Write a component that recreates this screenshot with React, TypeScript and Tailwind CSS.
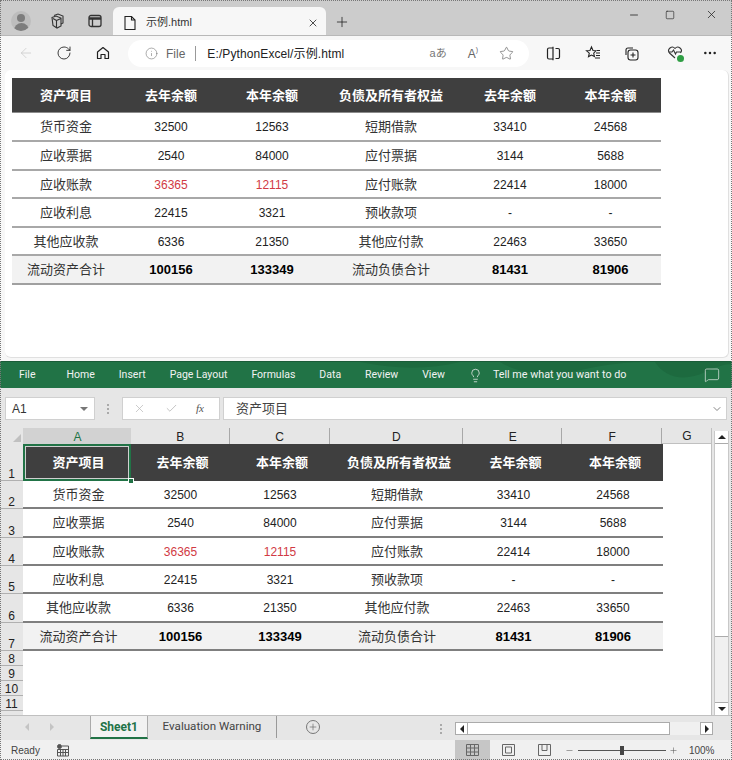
import React from 'react';
import { Plus, X, ArrowLeft, RotateCw, Star, MoreHorizontal, Check, ChevronDown, Lightbulb, MessageSquare, Info, Minus, Square } from 'lucide-react';

const FONT = "font-['Liberation_Sans','Noto_Sans_CJK_SC',sans-serif]";
const UI_FONT = "font-['Roboto','Noto_Sans_CJK_SC',sans-serif]";

const HEAD = ['资产项目', '去年余额', '本年余额', '负债及所有者权益', '去年余额', '本年余额'];
const ROWS = [
    ['货币资金', '32500', '12563', '短期借款', '33410', '24568'],
    ['应收票据', '2540', '84000', '应付票据', '3144', '5688'],
    ['应收账款', '36365', '12115', '应付账款', '22414', '18000'],
    ['应收利息', '22415', '3321', '预收款项', '-', '-'],
    ['其他应收款', '6336', '21350', '其他应付款', '22463', '33650'],
];
const TOTAL = ['流动资产合计', '100156', '133349', '流动负债合计', '81431', '81906'];

const cellStyle = (row: number, col: number, total?: boolean) => {
    if (col % 3 === 0) return 'text-[13px] text-[#333]';
    if (total) return 'text-[13px] font-bold text-black';
    if (row === 2 && col < 3) return 'text-[12px] text-[#d13a44]';
    return 'text-[12px] text-[#222]';
};

const Cell = ({ text, row, col, total }: { text: string; row: number; col: number; total?: boolean }) => (
    <div className={`flex items-center justify-center ${cellStyle(row, col, total)}`}>{text}</div>
);

const BrowserTable = () => {
    const heights = ['h-[29px]', 'h-[29px]', 'h-[28px]', 'h-[29px]', 'h-[28px]'];
    const cols = 'grid grid-cols-[108px_102px_100px_138px_100px_101px]';
    return (
        <div className="w-[649px]">
            <div className={`${cols} h-[35px] bg-[#3f3f3f] border-b border-[#8c8c8c]`}>
                {HEAD.map((h, i) => (
                    <div key={i} className="flex items-center justify-center pt-[1px] text-[13px] font-bold text-white">{h}</div>
                ))}
            </div>
            {ROWS.map((r, ri) => (
                <div key={ri} className={`${cols} ${heights[ri]} pt-[1px] border-b-2 border-[#a8a8a8]`}>
                    {r.map((t, ci) => <Cell key={ci} text={t} row={ri} col={ci} />)}
                </div>
            ))}
            <div className={`${cols} h-[29px] pt-[1px] bg-[#f2f2f2] border-b-2 border-[#a0a0a0]`}>
                {TOTAL.map((t, ci) => <Cell key={ci} text={t} row={9} col={ci} total />)}
            </div>
        </div>
    );
};

const SheetTable = () => {
    const heights = ['h-[28px]', 'h-[29px]', 'h-[28px]', 'h-[28px]', 'h-[29px]'];
    const cols = 'grid grid-cols-[108px_99px_100px_134px_99px_100px] [&>div:first-child]:pl-[3px]';
    return (
        <div className="w-[640px]">
            <div className={`${cols} h-[37px] bg-[#3f3f3f] relative`}>
                {HEAD.map((h, i) => (
                    <div key={i} className="flex items-center justify-center pl-[4px] text-[13px] font-bold text-white">{h}</div>
                ))}
                <div className="absolute left-0 top-0 w-[108px] h-[37px] border-2 border-[#217346] outline outline-1 -outline-offset-3 outline-[#d0d0d0]" />
                <div className="absolute left-[105px] top-[34px] w-[6px] h-[6px] bg-[#217346] border border-white" />
            </div>
            {ROWS.map((r, ri) => (
                <div key={ri} className={`${cols} ${heights[ri]} pt-[1px] border-b-2 border-[#7f7f7f]`}>
                    {r.map((t, ci) => <Cell key={ci} text={t} row={ri} col={ci} />)}
                </div>
            ))}
            <div className={`${cols} h-[28px] pt-[1px] bg-[#f2f2f2] border-b-2 border-[#7f7f7f]`}>
                {TOTAL.map((t, ci) => <Cell key={ci} text={t} row={9} col={ci} total />)}
            </div>
        </div>
    );
};

const TabStrip = () => (
    <div className="h-[36px] bg-[#cccccc] flex items-end border-b border-[#b8b8b8]">
        <div className="w-[20px] h-[20px] ml-[11px] mb-[4px] rounded-full bg-[#bdbdbd] overflow-hidden flex flex-col items-center shrink-0">
            <div className="w-[8px] h-[8px] rounded-full bg-[#7d7d7d] mt-[3px]" />
            <div className="w-[15px] h-[8px] rounded-t-full bg-[#7d7d7d] mt-[1px]" />
        </div>
        <svg width="18" height="18" viewBox="0 0 18 18" fill="none" stroke="#333" strokeWidth="1.1" className="ml-[17px] mb-[5px] shrink-0">
            <path d="M6 3.500 10 2l5 2v7l-2 1" />
            <path d="M4 5.500 8 4l5 2v8l-4 2-4-2.500z" />
            <path d="M8.500 8.500V16M8.500 8.500 5 6.500M8.500 8.500 13 6.500" />
        </svg>
        <svg width="16" height="16" viewBox="0 0 16 16" fill="none" stroke="#333" strokeWidth="1.3" className="ml-[21px] mb-[6px] shrink-0">
            <rect x="2" y="2.500" width="12" height="11" rx="2" />
            <path d="M2 5.500h12" strokeWidth="2.500" />
            <path d="M5.500 5.500v8" />
        </svg>
        <div className="ml-[10px] w-[213px] h-[28px] pt-[3px] bg-[#f7f7f7] rounded-t-[6px] flex items-center shrink-0">
            <svg width="14" height="16" viewBox="0 0 14 16" fill="none" stroke="#222" strokeWidth="1.1" className="ml-[10px]">
                <path d="M2 1.500h6.500l3.500 3.500v9.500H2z" />
                <path d="M8.500 1.500V5H12" />
            </svg>
            <span className="ml-[9px] text-[11px] text-[#333]">示例.html</span>
            <X size={12} strokeWidth={1.6} className="ml-auto mr-[7px] text-[#222]" />
        </div>
        <Plus size={16} strokeWidth={1.2} className="ml-[8px] mb-[5px] text-[#222]" />
        <div className="ml-auto flex items-center mb-[14px] mr-[6px] text-[#222]">
            <Minus size={12} strokeWidth={1.6} />
            <Square size={10} strokeWidth={1.5} className="ml-[25px]" />
            <X size={13} strokeWidth={1.4} className="ml-[30px] mr-[8px]" />
        </div>
    </div>
);

const AddressBar = () => (
    <div className="h-[34px] bg-[#f7f7f7] flex items-center text-[#333]">
        <ArrowLeft size={16} strokeWidth={1} className="ml-[18px] text-[#c4c4c4] shrink-0" />
        <RotateCw size={16} strokeWidth={1.3} className="ml-[22px] text-[#222] shrink-0" />
        <svg width="16" height="16" viewBox="0 0 16 16" fill="none" stroke="#222" strokeWidth="1.2" className="ml-[23px] shrink-0">
            <path d="M2.500 7 8 2.500 13.500 7v6.500h-3.500V9.500H6v4H2.500z" strokeLinejoin="round" />
        </svg>
        <div className="ml-[17px] w-[401px] h-[27px] mt-[1px] bg-white rounded-full flex items-center shrink-0">
            <Info size={13} strokeWidth={1} className="ml-[17px] text-[#666]" />
            <span className="ml-[8px] text-[12px] text-[#666]">File</span>
            <div className="ml-[10px] w-px h-[15px] bg-[#999]" />
            <span className="ml-[11px] text-[12px] tracking-[0.1px] text-[#222] whitespace-nowrap">E:/PythonExcel/示例.html</span>
            <span className="ml-auto text-[11px] text-[#777] whitespace-nowrap">aあ</span>
            <span className="ml-[21px] text-[12px] text-[#666]">A<span className="text-[7px] align-top">)</span></span>
            <Star size={15} strokeWidth={1} className="ml-[21px] mr-[15px] text-[#555]" />
        </div>
        <svg width="15" height="15" viewBox="0 0 15 15" fill="none" stroke="#222" strokeWidth="1.2" className="ml-[17px] shrink-0">
            <path d="M7 2H3a1.500 1.500 0 0 0-1.500 1.500v8A1.500 1.500 0 0 0 3 13h4zM7 .8v13.400M9.500 2.500H12A1.500 1.500 0 0 1 13.500 4v7a1.500 1.500 0 0 1-1.500 1.500H9.500" />
        </svg>
        <svg width="17" height="16" viewBox="0 0 17 16" fill="none" stroke="#222" strokeWidth="1.1" className="ml-[24px] shrink-0">
            <path d="m6.500 2 1.500 3.500 3 .3-2.300 2.400.7 3.300L6.500 10l-3 1.600.8-3.400L1.500 5.800l3.500-.3z" />
            <path d="M11 8h4M11 10.500h4M10 13h5M12 5.500h3" />
        </svg>
        <svg width="17" height="17" viewBox="0 0 17 17" fill="none" stroke="#222" strokeWidth="1.1" className="ml-[21px] shrink-0">
            <path d="M3 10V5a2 2 0 0 1 2-2h5" />
            <rect x="5" y="5" width="10" height="10" rx="2.500" />
            <path d="M10 7.500v5M7.500 10h5" />
        </svg>
        <div className="relative ml-[27px] w-[16px] h-[16px] shrink-0">
            <svg width="16" height="15" viewBox="0 0 16 15" fill="none" stroke="#333" strokeWidth="1.1">
                <path d="M8 13 2.500 8A3.300 3.300 0 0 1 8 3.500 3.300 3.300 0 0 1 13.500 8" />
                <path d="M1.500 7H5l1.500-2 2 4 1-2h4.500" />
            </svg>
            <div className="absolute right-[-1px] bottom-[-1px] w-[7px] h-[7px] rounded-full bg-[#2f9e44]" />
        </div>
        <MoreHorizontal size={16} strokeWidth={1.8} className="ml-[19px] text-[#222] shrink-0" />
    </div>
);

const RIBBON = [
    ['File', 'ml-[19px]'], ['Home', 'ml-[31px]'], ['Insert', 'ml-[24px]'], ['Page Layout', 'ml-[24px]'],
    ['Formulas', 'ml-[24px]'], ['Data', 'ml-[24px]'], ['Review', 'ml-[24px]'], ['View', 'ml-[24px]'],
];

const Ribbon = () => (
    <div className={`h-[27px] bg-[#217346] flex items-center text-[10.5px] text-[#f2f2f2] relative border-t border-[#1a5c38] ${UI_FONT}`}>
        <svg width="732" height="27" viewBox="0 0 732 27" className="absolute left-0 top-0">
            <path d="M360 0c40 8 70 7 100 0zM500 0c20 12 50 16 90 6 30-6 50-6 60-6zM655 0c10 16 30 20 50 10 10-5 20-8 27-8V0z" fill="#1d6a3f" />
        </svg>
        {RIBBON.map(([t, m]) => <span key={t} className={`relative ${m}`}>{t}</span>)}
        <Lightbulb size={15} strokeWidth={1.2} className="relative ml-[23px]" />
        <span className="relative ml-[10px] text-[10.75px]">Tell me what you want to do</span>
        <MessageSquare size={16} strokeWidth={1} className="relative ml-auto mr-[12px]" />
    </div>
);

const FormulaBar = () => (
    <div className="h-[40px] pt-[1px] bg-[#e6e6e6] flex items-center">
        <div className="ml-[5px] w-[90px] h-[23px] bg-white border border-[#d0d0d0] flex items-center text-[12px] text-[#333]">
            <span className="ml-[6px]">A1</span>
            <div className="ml-auto mr-[6px] w-0 h-0 border-x-[4px] border-x-transparent border-t-[4px] border-t-[#777]" />
        </div>
        <div className="ml-[12px] w-[2px] h-[10px] border-l-2 border-dotted border-[#aaa]" />
        <div className="ml-[13px] w-[98px] h-[23px] bg-white border border-[#d0d0d0] flex items-center text-[#bbb]">
            <X size={13} strokeWidth={1.4} className="ml-[10px]" />
            <Check size={13} strokeWidth={1.6} className="ml-[19px]" />
            <span className="ml-[18px] text-[11px] italic text-[#555] font-['Liberation_Serif',serif]">fx</span>
        </div>
        <div className="ml-[3px] w-[504px] h-[23px] bg-white border border-[#d0d0d0] flex items-center text-[13px] text-[#444]">
            <span className="ml-[12px]">资产项目</span>
            <ChevronDown size={12} strokeWidth={1.6} className="ml-auto mr-[3px] text-[#666]" />
        </div>
    </div>
);

const COLS = [
    ['A', 'w-[108px]'], ['B', 'w-[99px]'], ['C', 'w-[100px]'], ['D', 'w-[134px]'], ['E', 'w-[99px]'], ['F', 'w-[100px]'], ['G', 'w-[49px]'],
];

const ROW_HEADS = [
    ['1', 'h-[37px]'], ['2', 'h-[28px]'], ['3', 'h-[29px]'], ['4', 'h-[28px]'], ['5', 'h-[28px]'], ['6', 'h-[29px]'], ['7', 'h-[28px]'],
    ['8', 'h-[15px]'], ['9', 'h-[15px]'], ['10', 'h-[15px]'], ['11', 'h-[15px]'], ['', 'h-[5px]'],
];

const VScroll = () => (
    <div className="ml-[2px] w-[15px] bg-[#f0f0f0] flex flex-col mt-[3px] border-x border-[#c8c8c8]">
        <div className="h-[13px] bg-white border-b border-[#ababab] flex items-center justify-center">
            <div className="w-0 h-0 border-x-[4px] border-x-transparent border-b-[4px] border-b-[#222]" />
        </div>
        <div className="h-[193px] bg-white border-b border-[#ababab]" />
        <div className="flex-1" />
        <div className="h-[13px] bg-white border-t border-[#ababab] flex items-center justify-center">
            <div className="w-0 h-0 border-x-[4px] border-x-transparent border-t-[4px] border-t-[#222]" />
        </div>
    </div>
);

const Sheet = () => (
    <div className="h-[287px] bg-[#e6e6e6] flex text-[#222]">
        <div className="w-[712px] shrink-0 border-r border-[#c0c0c0] flex flex-col">
            <div className="h-[16px] flex">
                <div className="w-[23px] flex items-end justify-end pr-[2px] pb-[2px]">
                    <div className="w-0 h-0 border-l-[8px] border-l-transparent border-b-[8px] border-b-[#c0c0c0]" />
                </div>
                {COLS.map(([c, w], i) => (
                    <div
                        key={c}
                        className={`${w} flex items-end justify-center pl-[1px] text-[12px] leading-[13px] ${
                            i === 0 ? 'bg-[#d2d2d2] text-[#217346]' : i === 6 ? 'border-b border-[#c0c0c0]' : 'border-r border-[#a8a8a8]'
                        }`}
                    >
                        {c}
                    </div>
                ))}
            </div>
            <div className="flex flex-1 min-h-0 overflow-hidden">
                <div className="w-[23px] shrink-0">
                    {ROW_HEADS.map(([n, h]) => (
                        <div key={n} className={`${h} flex items-end justify-center text-[12px] leading-[12px] border-b border-[#b0b0b0]`}>{n}</div>
                    ))}
                </div>
                <div className="flex-1 bg-white">
                    <SheetTable />
                </div>
            </div>
        </div>
        <VScroll />
    </div>
);

const TabBar = () => (
    <div className="h-[25px] bg-[#e6e6e6] flex items-start border-t border-[#c0c0c0]">
        <span className="ml-[25px] mt-[7px] w-0 h-0 border-y-[4px] border-y-transparent border-r-[4px] border-r-[#c4c4c4]" />
        <span className="ml-[21px] mt-[7px] w-0 h-0 border-y-[4px] border-y-transparent border-l-[4px] border-l-[#c4c4c4]" />
        <div className={`ml-[36px] w-[58px] h-[23px] bg-[#f2f2f2] border-x border-[#aaa] border-b-2 border-b-[#217346] flex items-center justify-center text-[12px] font-bold text-[#217346] ${UI_FONT}`}>
            Sheet1
        </div>
        <div className={`w-[129px] h-[22px] flex items-center justify-center text-[11.6px] text-[#444] border-r border-[#999] ${UI_FONT}`}>Evaluation Warning</div>
        <div className="ml-[29px] mt-[4px] w-[14px] h-[14px] rounded-full border border-[#777] flex items-center justify-center">
            <Plus size={10} strokeWidth={1.6} className="text-[#666]" />
        </div>
        <div className="ml-[120px] mt-[8px] w-[2px] h-[10px] border-l-2 border-dotted border-[#aaa]" />
        <div className="ml-[13px] mt-[6px] w-[258px] h-[13px] bg-[#f0f0f0] flex">
            <div className="w-[13px] bg-white border border-[#ababab] flex items-center justify-center">
                <div className="w-0 h-0 border-y-[4px] border-y-transparent border-r-[4px] border-r-[#222]" />
            </div>
            <div className="w-[202px] bg-white border-y border-r border-[#ababab]" />
            <div className="flex-1" />
            <div className="w-[13px] bg-white border border-[#ababab] flex items-center justify-center">
                <div className="w-0 h-0 border-y-[4px] border-y-transparent border-l-[4px] border-l-[#222]" />
            </div>
        </div>
    </div>
);

const StatusBar = () => (
    <div className="h-[20px] bg-[#f0f0f0] flex items-center text-[10px] text-[#444]">
        <span className="ml-[11px]">Ready</span>
        <svg width="12" height="13" viewBox="0 0 12 13" fill="none" stroke="#555" strokeWidth="1" className="ml-[17px]">
            <circle cx="2.500" cy="2.500" r="2" fill="#555" />
            <path d="M5 2h6.500v10H.500V5.500h11M3.500 5.500V12M6 5.500V12M8.500 5.500V12M.500 8.500h11" />
        </svg>
        <div className="ml-[386px] w-[35px] h-[20px] bg-[#c6c6c6] flex items-center justify-center">
            <svg width="13" height="12" viewBox="0 0 13 12" fill="none" stroke="#666" strokeWidth="1">
                <path d="M.500.500h12v11H.500zM4.500.500v11M8.500.500v11M.500 4h12M.500 8h12" />
            </svg>
        </div>
        <svg width="13" height="12" viewBox="0 0 13 12" fill="none" stroke="#666" strokeWidth="1" className="ml-[12px]">
            <path d="M.500.500h12v11H.500zM3.500 3h6v6h-6z" />
        </svg>
        <svg width="13" height="12" viewBox="0 0 13 12" fill="none" stroke="#666" strokeWidth="1" className="ml-[23px]">
            <path d="M.500.500h12v11H.500zM4 .500v6h5v-6" />
        </svg>
        <Minus size={9} strokeWidth={1.4} className="ml-[14px] text-[#555]" />
        <div className="ml-[4px] w-[88px] h-px bg-[#555] flex items-center justify-center">
            <div className="w-[4px] h-[9px] bg-[#444]" />
        </div>
        <Plus size={9} strokeWidth={1.4} className="ml-[3px] text-[#555]" />
        <span className="ml-[11px]">100%</span>
    </div>
);

export default function App() {
    return (
        <div className={`relative w-[732px] h-[760px] overflow-hidden bg-white ${FONT}`}>
            <TabStrip />
            <AddressBar />
            <div className="h-[291px] bg-[#f7f7f7] pl-[5px] pr-[3px] pb-[3px]">
                <div className="h-[288px] bg-white rounded-[6px] pl-[7px] pt-[8px] border-b border-[#e0e0e0] border-r">
                    <BrowserTable />
                </div>
            </div>
            <Ribbon />
            <FormulaBar />
            <Sheet />
            <TabBar />
            <StatusBar />
            <div className="absolute inset-0 border border-dotted border-[#777] pointer-events-none" />
        </div>
    );
}
